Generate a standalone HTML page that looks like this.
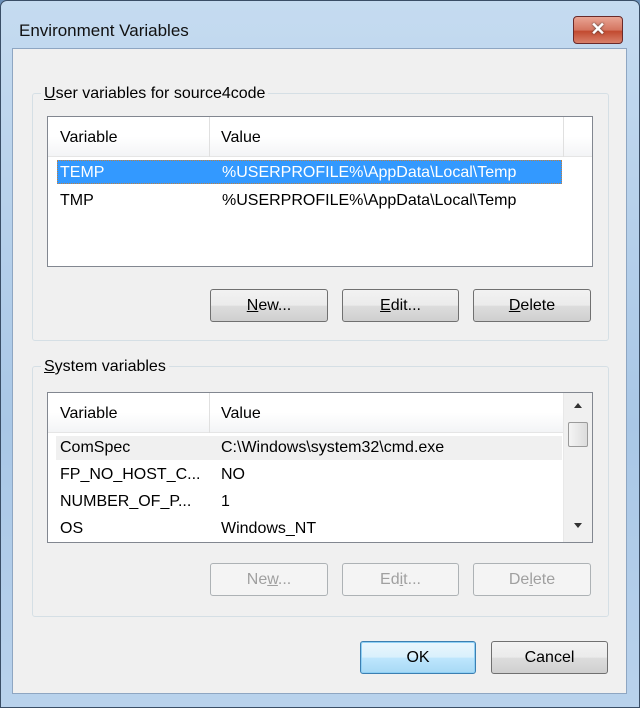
<!DOCTYPE html>
<html><head><meta charset="utf-8"><style>
*{box-sizing:border-box;margin:0;padding:0}
body{width:640px;height:708px;overflow:hidden;font-family:"Liberation Sans",sans-serif;font-size:15px;color:#000;background:#6b8fb8}
.frame{position:absolute;left:0;top:0;width:640px;height:708px;border:1px solid #3a4e66;border-radius:7px 7px 0 0;background:linear-gradient(#c5dbf0,#a9c7e6 60%,#b9d2ec)}
.title{position:absolute;left:19px;top:21px;font-size:17px;color:#111}
.close{position:absolute;left:573px;top:16px;width:50px;height:28px;border:1px solid #6a2a2a;border-radius:4px;background:linear-gradient(#e9a494,#d47560 50%,#c24a30 55%,#d8806a);color:#fff;font-weight:bold;font-size:18px;text-align:center;line-height:25px;text-shadow:0 0 2px #333}
.content{position:absolute;left:12px;top:48px;width:615px;height:646px;background:#f0f0f0;border:1px solid #8ea6c2}
.grp{position:absolute;border:1px solid #d5dfe5;border-radius:3px}
.lbl{position:absolute;background:#f0f0f0;padding:0 3px;font-size:16px}
.lv{position:absolute;background:#fff;border:1px solid #828790}
.hdr{position:absolute;left:0;top:0;right:0;height:40px;background:linear-gradient(#fff,#fff 50%,#f3f4f6);border-bottom:1px solid #e5e5e5}
.hdr span{position:absolute;top:12px;font-size:16px}
.sep{position:absolute;top:0;width:1px;height:40px;background:#e0e0e0}
.row{position:absolute;height:24px;font-size:16px;line-height:24px}
.btn{position:absolute;height:33px;border:1px solid #707070;border-radius:3px;background:linear-gradient(#f2f2f2,#ebebeb 50%,#dddddd 51%,#cfcfcf);text-align:center;line-height:31px;font-size:16px}
.dis{border-color:#adb2b5;background:#f4f4f4;color:#a0a0a0}
</style></head><body>
<div class="frame"></div>
<div class="title">Environment Variables</div>
<div class="close">✕</div>
<div class="content"></div>

<div class="grp" style="left:32px;top:93px;width:577px;height:248px"></div>
<div class="lbl" style="left:41px;top:85px"><u>U</u>ser variables for source4code</div>
<div class="lv" style="left:47px;top:116px;width:546px;height:151px">
 <div class="hdr"><span style="left:12px">Variable</span><span style="left:173px">Value</span><div class="sep" style="left:161px"></div><div class="sep" style="left:515px"></div></div>
 <div class="row" style="left:9px;top:43px;width:505px;background:#3399ff;color:#fff;border:1px dotted #c08040"><span style="position:absolute;left:2px;top:0px">TEMP</span><span style="position:absolute;left:164px;top:0px">%USERPROFILE%\AppData\Local\Temp</span></div>
 <div class="row" style="left:12px;top:72px">TMP</div>
 <div class="row" style="left:174px;top:72px">%USERPROFILE%\AppData\Local\Temp</div>
</div>
<div class="btn" style="left:210px;top:289px;width:118px"><u>N</u>ew...</div>
<div class="btn" style="left:342px;top:289px;width:117px"><u>E</u>dit...</div>
<div class="btn" style="left:473px;top:289px;width:118px"><u>D</u>elete</div>

<div class="grp" style="left:32px;top:366px;width:577px;height:251px"></div>
<div class="lbl" style="left:41px;top:358px"><u>S</u>ystem variables</div>
<div class="lv" style="left:47px;top:392px;width:546px;height:151px">
 <div class="hdr" style="right:29px"><span style="left:12px">Variable</span><span style="left:173px">Value</span><div class="sep" style="left:161px"></div></div>
 <div class="row" style="left:8px;top:43px;width:506px;background:#f0f0f0"></div>
 <div class="row" style="left:12px;top:43px">ComSpec</div><div class="row" style="left:173px;top:43px">C:\Windows\system32\cmd.exe</div>
 <div class="row" style="left:12px;top:70px">FP_NO_HOST_C...</div><div class="row" style="left:173px;top:70px">NO</div>
 <div class="row" style="left:12px;top:97px">NUMBER_OF_P...</div><div class="row" style="left:173px;top:97px">1</div>
 <div class="row" style="left:12px;top:124px">OS</div><div class="row" style="left:173px;top:124px">Windows_NT</div>
 <div style="position:absolute;right:0;top:0;width:29px;height:149px;background:#f0f0f0;border-left:1px solid #e8e8e8">
  <div style="position:absolute;left:10px;top:10px;border:4px solid transparent;border-bottom:5px solid #333;border-top:0"></div>
  <div style="position:absolute;left:4px;top:29px;width:20px;height:25px;border:1px solid #9a9a9a;border-radius:2px;background:linear-gradient(90deg,#f4f4f4,#dcdcdc)"></div>
  <div style="position:absolute;left:10px;top:130px;border:4px solid transparent;border-top:5px solid #333;border-bottom:0"></div>
 </div>
</div>
<div class="btn dis" style="left:210px;top:563px;width:118px">Ne<u>w</u>...</div>
<div class="btn dis" style="left:342px;top:563px;width:117px">Ed<u>i</u>t...</div>
<div class="btn dis" style="left:473px;top:563px;width:118px">De<u>l</u>ete</div>

<div class="btn" style="left:360px;top:641px;width:116px;border-color:#3c7fb1;background:linear-gradient(#eaf6fd,#d9f0fc 50%,#bee6fd 51%,#a7d9f5);box-shadow:inset 0 0 0 1px #8fd0f5">OK</div>
<div class="btn" style="left:491px;top:641px;width:117px">Cancel</div>
</body></html>
